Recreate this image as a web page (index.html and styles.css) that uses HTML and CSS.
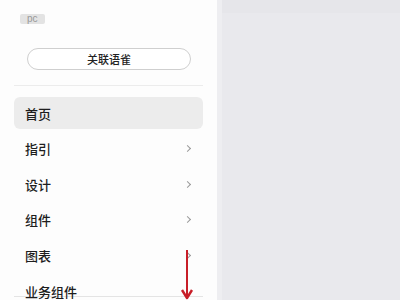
FILE: index.html
```html
<!DOCTYPE html>
<html>
<head>
<meta charset="utf-8">
<link rel="stylesheet" href="styles.css">
</head>
<body>
<div class="page">
  <aside class="side">
    <div class="top">
      <span class="badge">pc</span>
    </div>
    <div class="btn-wrap">
      <button class="link-btn">关联语雀</button>
    </div>
    <div class="divider"></div>
    <nav class="menu">
      <div class="item active"><span>首页</span></div>
      <div class="item"><span>指引</span><span class="chev"></span></div>
      <div class="item"><span>设计</span><span class="chev"></span></div>
      <div class="item"><span>组件</span><span class="chev"></span></div>
      <div class="item"><span>图表</span><span class="chev"></span></div>
      <div class="item last"><span>业务组件</span></div>
    </nav>
    <svg class="arrow" width="16" height="52" viewBox="0 0 16 52">
      <path d="M8 1 L8 48" stroke="#c81e28" stroke-width="2" fill="none"/>
      <path d="M3 41 L8 49 L13 41" stroke="#c81e28" stroke-width="2.4" fill="none" stroke-linejoin="round"/>
    </svg>
  </aside>
  <main class="main">
    <div class="main-top"></div>
  </main>
</div>
</body>
</html>
```
FILE: styles.css
```css
* { box-sizing: border-box; }
html, body { margin: 0; padding: 0; }
body {
  width: 400px;
  height: 300px;
  overflow: hidden;
  font-family: "Noto Sans CJK SC", "Noto Sans", sans-serif;
  background: #e9e9ed;
}
.page {
  display: flex;
  height: 300px;
}
.side {
  position: relative;
  width: 217px;
  flex: none;
  background: #fdfdfd;
  padding: 0 14px;
}
.top {
  height: 48px;
  padding-top: 3px;
  padding-left: 6px;
}
.badge {
  display: inline-block;
  background: #e3e3e3;
  color: #999;
  font-size: 10px;
  line-height: 10px;
  height: 10px;
  padding: 0 7px;
  border-radius: 2px;
  font-family: "Liberation Sans", sans-serif;
}
.btn-wrap {
  padding: 0 13px;
}
.link-btn {
  display: block;
  width: 164px;
  height: 22px;
  border: 1px solid #cfcfcf;
  border-radius: 11px;
  background: #fff;
  font-family: "Noto Sans CJK SC", sans-serif;
  font-size: 11px;
  font-weight: 500;
  color: #222;
  padding: 0;
  line-height: 20px;
}
.divider {
  height: 1px;
  background: #ececec;
  margin-top: 15px;
  margin-bottom: 11px;
}
.menu {
  display: flex;
  flex-direction: column;
  gap: 3.5px;
}
.item {
  height: 32px;
  display: flex;
  align-items: center;
  justify-content: space-between;
  padding: 0 11px 0 11px;
  font-size: 13px;
  font-weight: 500;
  color: #1e1e1e;
  border-radius: 6px;
}
.item.active {
  background: #ececec;
}
.item.last {
  height: 22px;
  border-bottom: 1px solid #e4e4e4;
  border-radius: 0;
  align-items: flex-start;
  padding-top: 8px;
  line-height: 18px;
  overflow: visible;
}
.chev {
  width: 5px;
  height: 5px;
  border-top: 1px solid #999;
  border-right: 1px solid #999;
  transform: rotate(45deg);
  margin-right: 2px;
}
.arrow {
  position: absolute;
  left: 179px;
  top: 249px;
}
.main {
  flex: 1;
  border-left: 5px solid #eeeef1;
  background: #e9e9ed;
}
.main-top {
  height: 13px;
  background: #e6e6ea;
}
```
